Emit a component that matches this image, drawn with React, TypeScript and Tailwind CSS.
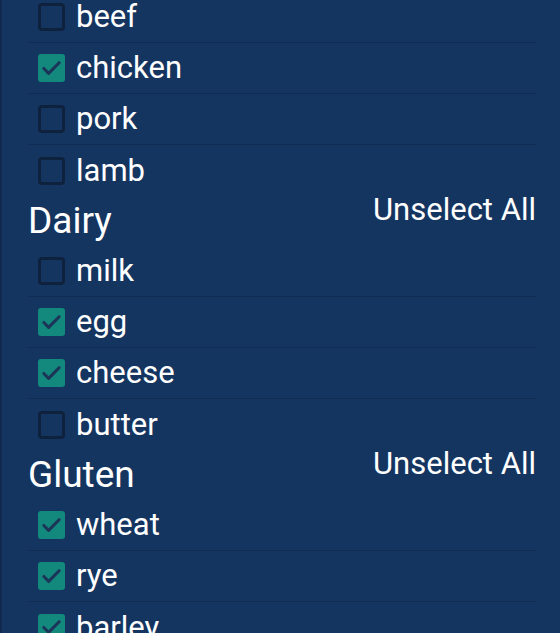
import { Check } from "lucide-react";

type Item = { label: string; checked: boolean };
type Section = { title?: string; items: Item[] };

const sections: Section[] = [
  {
    items: [
      { label: "beef", checked: false },
      { label: "chicken", checked: true },
      { label: "pork", checked: false },
      { label: "lamb", checked: false },
    ],
  },
  {
    title: "Dairy",
    items: [
      { label: "milk", checked: false },
      { label: "egg", checked: true },
      { label: "cheese", checked: true },
      { label: "butter", checked: false },
    ],
  },
  {
    title: "Gluten",
    items: [
      { label: "wheat", checked: true },
      { label: "rye", checked: true },
      { label: "barley", checked: true },
    ],
  },
];

function Box({ checked }: { checked: boolean }) {
  if (checked) {
    return (
      <span className="flex h-[28px] w-[27px] shrink-0 items-center justify-center rounded-[3px] bg-[#13897d]">
        <Check className="h-[23px] w-[23px] text-[#1b3559]" strokeWidth={3.2} />
      </span>
    );
  }
  return <span className="h-[28px] w-[27px] shrink-0 rounded-[4px] border-[3px] border-[#0e213d]" />;
}

export default function App() {
  return (
    <div
      className="h-[633px] w-[560px] overflow-hidden border-l-2 border-[#102a4f] bg-[#153561] text-white"
      style={{ fontFamily: "Roboto, 'Open Sans', sans-serif" }}
    >
      <div className="-mt-[8px] pl-[26px] pr-[24px]">
        {sections.map((section, si) => (
          <div key={si}>
            {section.title && (
              <div className="flex items-start justify-between pb-[5px]">
                <h2 className="mt-[5px] text-[37px] leading-[40px]">{section.title}</h2>
                <button className="-mt-[3px] text-[31px] leading-[34px]">Unselect All</button>
              </div>
            )}
            {section.items.map((item, i) => (
              <label
                key={item.label}
                className={`flex h-[51px] items-center gap-[11px] pl-[10px] ${
                  i < section.items.length - 1 ? "border-b border-[#112c52]" : ""
                }`}
              >
                <Box checked={item.checked} />
                <span className="text-[31px] leading-[36px]">{item.label}</span>
              </label>
            ))}
          </div>
        ))}
      </div>
    </div>
  );
}
